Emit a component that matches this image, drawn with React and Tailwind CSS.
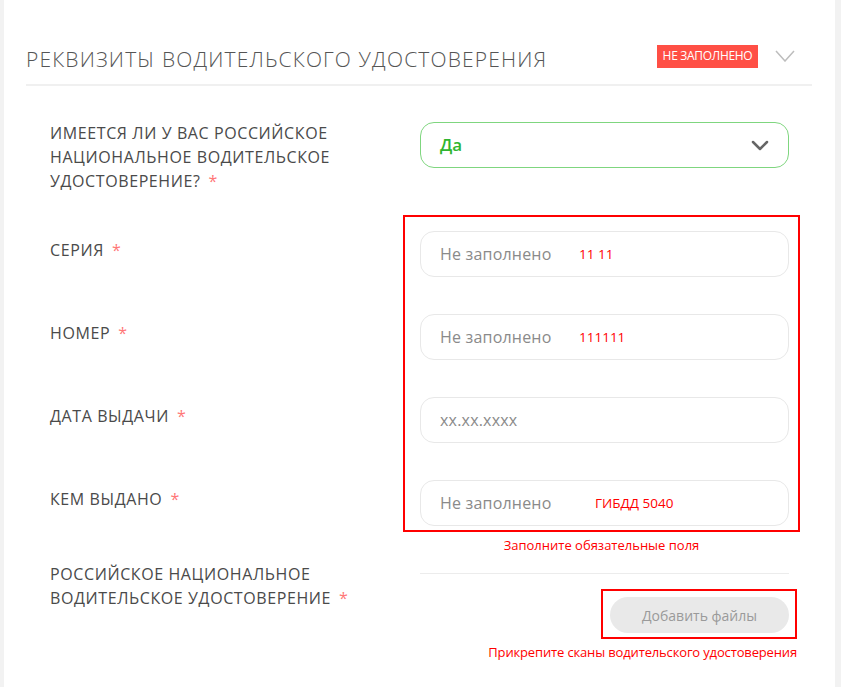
const labelCls = "text-[16px] leading-[24px] text-[#4a4a4a] uppercase tracking-[0.6px]"

const Star = () => <span className="text-[#f77] ml-[8px]">*</span>

const Field = ({ placeholder, note, noteLeft }) => (
    <div className="relative h-[46px] w-[369px] rounded-[14px] border border-[#e8e8e8] bg-white flex items-center px-[19px]">
        <span className="text-[16px] text-[#8a8a8a] tracking-[0.2px]">{placeholder}</span>
        {note && (
            <span className={`absolute top-1/2 -translate-y-1/2 text-[13.5px] text-[#ff0000] ${noteLeft}`}>{note}</span>
        )}
    </div>
)

const App = () => {
    const rows = [
        { label: "Серия", placeholder: "Не заполнено", note: "11 11", noteLeft: "left-[158px]" },
        { label: "Номер", placeholder: "Не заполнено", note: "111111", noteLeft: "left-[158px]" },
        { label: "Дата выдачи", placeholder: "xx.xx.xxxx" },
        { label: "Кем выдано", placeholder: "Не заполнено", note: "ГИБДД 5040", noteLeft: "left-[174px]" },
    ]

    return (
        <div className="w-[841px] h-[687px] bg-[#f2f2f2] overflow-hidden font-['Open_Sans',sans-serif]">
            <div className="ml-[4px] w-[831px] h-full bg-white pl-[22px]">
                {/* header */}
                <div className="w-[786px] flex items-center justify-between pt-[45px] pb-[11px] border-b-2 border-[#f0f0f0]">
                    <h2 className="text-[21px] leading-[28px] font-light text-[#555] uppercase tracking-[1.15px]">Реквизиты водительского удостоверения</h2>
                    <div className="flex items-center gap-[17px] pr-[17px] -mt-[6px]">
                        <span className="h-[23px] w-[101px] bg-[#ff4f45] text-white text-[12px] flex items-center justify-center tracking-[-0.3px]">НЕ ЗАПОЛНЕНО</span>
                        <svg width="20" height="12" viewBox="0 0 20 12" fill="none" stroke="#bdbdbd" strokeWidth="1.5">
                            <path d="M1 1l9 10 9-10" />
                        </svg>
                    </div>
                </div>

                <div className="pl-[24px]">
                    {/* question */}
                    <div className="flex items-start mt-[35px]">
                        <p className={`${labelCls} w-[370px] pr-[40px]`}>
                            Имеется ли у вас российское национальное водительское удостоверение?<Star />
                        </p>
                        <div className="mt-[1px] h-[46px] w-[369px] rounded-[14px] border border-[#7fd67f] flex items-center justify-between px-[19px]">
                            <span className="text-[17px] font-semibold text-[#2fb52f]">Да</span>
                            <svg width="18" height="11" viewBox="0 0 18 11" fill="none" stroke="#666" strokeWidth="2.5" strokeLinecap="round" strokeLinejoin="round">
                                <path d="M2 2l7 7 7-7" />
                            </svg>
                        </div>
                    </div>

                    {/* required fields */}
                    <div className="flex mt-[22px]">
                        <div className="w-[353px] pt-[23px]">
                            {rows.map((row, index) => (
                                <p key={index} className={`${labelCls} h-[83px]`}>{row.label}<Star /></p>
                            ))}
                        </div>
                        <div>
                            <div className="w-[397px] border-2 border-[#ff0000] pl-[15px] pt-[14px] pb-[4px] flex flex-col gap-[37px]">
                                {rows.map((row, index) => (
                                    <Field key={index} {...row} />
                                ))}
                            </div>
                            <p className="text-center text-[13px] leading-[18px] text-[#ff0000] mt-[4px]">Заполните обязательные поля</p>
                        </div>
                    </div>

                    {/* files */}
                    <div className="flex items-start -mt-[8px]">
                        <p className={`${labelCls} w-[370px] pr-[30px]`}>
                            Российское национальное водительское удостоверение<Star />
                        </p>
                        <div className="w-[369px] pt-[11px] flex flex-col items-end">
                            <div className="w-full border-t border-[#ececec]"></div>
                            <div className="mt-[15px] -mr-[8px] border-2 border-[#ff0000] pl-[7px] pr-[6px] pt-[6px] pb-[4px]">
                                <div className="h-[36px] w-[179px] rounded-full bg-[#e9e9e9] flex items-center justify-center text-[14px] text-[#9a9a9a]">Добавить файлы</div>
                            </div>
                            <p className="-mr-[8px] mt-[4px] text-[13px] leading-[18px] text-[#ff0000] whitespace-nowrap tracking-[-0.15px]">Прикрепите сканы водительского удостоверения</p>
                        </div>
                    </div>
                </div>
            </div>
        </div>
    )
}

export default App
